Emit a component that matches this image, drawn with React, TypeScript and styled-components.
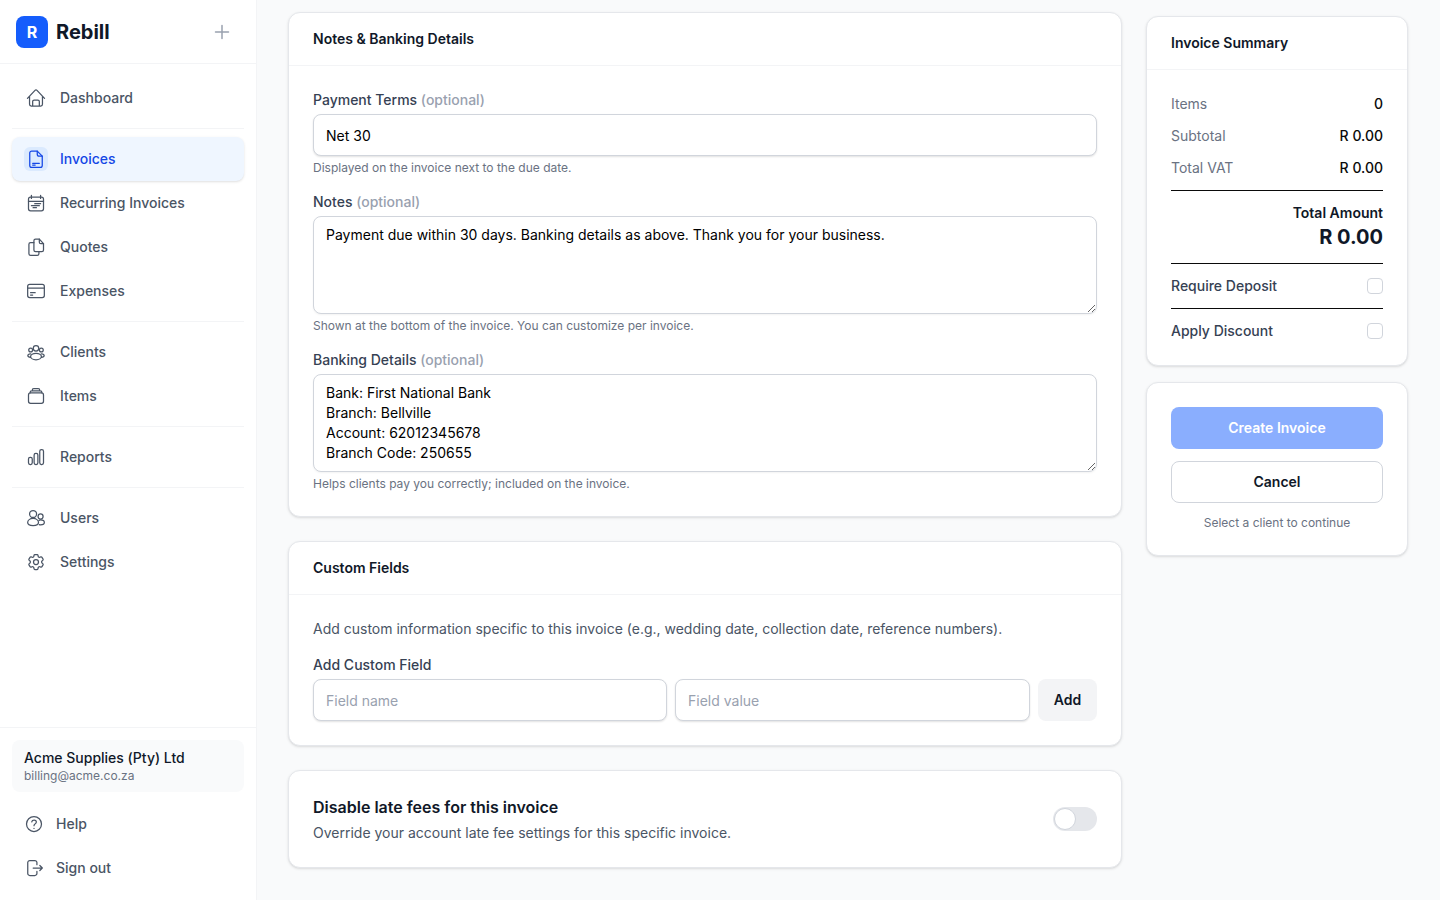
import React from "react";
import styled, { createGlobalStyle } from "styled-components";

const Global = createGlobalStyle`
  * { box-sizing: border-box; }
  html, body { margin: 0; padding: 0; height: 100%; }
  body { background: #f9fafb; font-family: Inter, "Liberation Sans", sans-serif; color: #101828; overflow: hidden; }
`;

const Shell = styled.div`
  display: flex;
  width: 1440px;
  height: 900px;
  overflow: hidden;
`;
const Sidebar = styled.aside`
  width: 257px;
  flex: none;
  height: 900px;
  background: #fff;
  border-right: 1px solid #f3f4f6;
  display: flex;
  flex-direction: column;
`;
const Brand = styled.div`
  height: 64px;
  flex: none;
  display: flex;
  align-items: center;
  padding: 0 16px;
  gap: 8px;
  border-bottom: 1px solid #f3f4f6;
`;
const Logo = styled.div`
  width: 32px;
  height: 32px;
  border-radius: 8px;
  background: #155dfc;
  color: #fff;
  font-size: 16px;
  font-weight: 700;
  display: flex;
  align-items: center;
  justify-content: center;
`;
const BrandName = styled.span`
  font-size: 20px;
  line-height: 28px;
  font-weight: 700;
  color: #101828;
  flex: 1;
`;
const PlusButton = styled.span`
  display: flex;
  margin-right: 8px;
  color: #99a1af;
`;
const Nav = styled.nav`
  flex: 1;
  padding: 12px 12px 0;
  display: flex;
  flex-direction: column;
`;
const NavDivider = styled.div`
  height: 1px;
  background: #f3f4f6;
  margin: 8px 0;
  flex: none;
`;
const NavItem = styled.a<{ $active?: boolean }>`
  height: 44px;
  flex: none;
  display: flex;
  align-items: center;
  gap: 12px;
  padding: 0 12px;
  font-size: 14px;
  line-height: 20px;
  font-weight: 500;
  border-radius: 8px;
  color: ${(p) => (p.$active ? "#1447e6" : "#4a5565")};
  background: ${(p) => (p.$active ? "#eff6ff" : "transparent")};
  box-shadow: ${(p) => (p.$active ? "0 1px 3px rgba(0,0,0,.1), 0 1px 2px -1px rgba(0,0,0,.1)" : "none")};
`;
const IconBox = styled.span<{ $active?: boolean }>`
  width: 24px;
  height: 24px;
  flex: none;
  display: flex;
  align-items: center;
  justify-content: center;
  border-radius: 6px;
  background: ${(p) => (p.$active ? "#dbeafe" : "transparent")};
`;
const SideFooter = styled.div`
  flex: none;
  border-top: 1px solid #f3f4f6;
  padding: 12px 12px 10px;
  display: flex;
  flex-direction: column;
`;
const Account = styled.div`
  height: 52px;
  padding: 8px 12px;
  border-radius: 8px;
  background: #f9fafb;
  margin-bottom: 10px;
`;
const AccountName = styled.div`
  font-size: 14px;
  line-height: 20px;
  font-weight: 500;
  color: #101828;
`;
const AccountMail = styled.div`
  font-size: 12px;
  line-height: 16px;
  color: #6a7282;
`;
const Main = styled.main`
  flex: 1;
  min-width: 0;
  padding: 12px 32px 32px 31px;
  display: flex;
  gap: 24px;
  align-items: flex-start;
`;
const LeftColumn = styled.div`
  width: 834px;
  flex: none;
  display: flex;
  flex-direction: column;
  gap: 24px;
`;
const RightColumn = styled.div`
  width: 262px;
  flex: none;
  margin-top: 4px;
  display: flex;
  flex-direction: column;
  gap: 16px;
`;
const Card = styled.section`
  background: #fff;
  border: 1px solid #e5e7eb;
  border-radius: 12px;
  box-shadow: 0 1px 3px rgba(0,0,0,.1), 0 1px 2px -1px rgba(0,0,0,.1);
`;
const CardHeader = styled.header`
  padding: 16px 24px;
  border-bottom: 1px solid #f3f4f6;
  font-size: 14px;
  line-height: 20px;
  font-weight: 600;
  color: #101828;
`;
const CardBody = styled.div`
  padding: 24px;
  display: flex;
  flex-direction: column;
  gap: 16px;
`;
const Field = styled.div`
  display: flex;
  flex-direction: column;
`;
const Label = styled.label`
  font-size: 14px;
  line-height: 20px;
  font-weight: 500;
  color: #364153;
  margin-bottom: 4px;
`;
const Optional = styled.span`
  color: #99a1af;
`;
const TextInput = styled.input`
  display: block;
  width: 100%;
  min-width: 0;
  height: 42px;
  padding: 8px 12px;
  border: 1px solid #d1d5dc;
  border-radius: 8px;
  box-shadow: 0 1px 2px rgba(0,0,0,.12);
  background: #fff;
  font: 400 14px/20px Inter, sans-serif;
  color: #000;
  outline: none;
  &::placeholder { color: #99a1af; opacity: 1; }
`;
const TextArea = styled.textarea`
  display: block;
  width: 100%;
  height: 98px;
  padding: 8px 12px;
  border: 1px solid #d1d5dc;
  border-radius: 8px;
  box-shadow: 0 1px 2px rgba(0,0,0,.05);
  background: #fff;
  font: 400 14px/20px Inter, sans-serif;
  color: #000;
  outline: none;
  resize: vertical;
`;
const Hint = styled.p`
  margin: 4px 0 0;
  font-size: 12px;
  line-height: 16px;
  color: #6a7282;
`;
const Intro = styled.p`
  margin: 0;
  font-size: 14px;
  line-height: 20px;
  color: #4a5565;
`;
const AddRow = styled.div`
  display: grid;
  grid-template-columns: 354px 355px 59px;
  gap: 8px;
`;
const AddButton = styled.button`
  height: 42px;
  border: none;
  border-radius: 8px;
  background: #f3f4f6;
  font: 600 14px/20px Inter, sans-serif;
  color: #101828;
`;
const ToggleCard = styled(Card)`
  padding: 24px;
  display: flex;
  align-items: center;
  justify-content: space-between;
`;
const ToggleTitle = styled.div`
  font-size: 16px;
  line-height: 24px;
  font-weight: 600;
  color: #101828;
  margin-bottom: 4px;
`;
const ToggleDesc = styled.div`
  font-size: 14px;
  line-height: 20px;
  color: #4a5565;
`;
const Toggle = styled.span`
  width: 44px;
  height: 24px;
  border-radius: 12px;
  background: #e5e7eb;
  padding: 1px;
  display: flex;
`;
const Knob = styled.span`
  width: 22px;
  height: 22px;
  border-radius: 50%;
  background: #fff;
  border: 1px solid #d1d5dc;
`;
const SummaryBody = styled.div`
  padding: 24px;
  display: flex;
  flex-direction: column;
`;
const SummaryRow = styled.div`
  display: flex;
  justify-content: space-between;
  font-size: 14px;
  line-height: 20px;
  margin-bottom: 12px;
`;
const SummaryKey = styled.span`
  color: #6a7282;
`;
const SummaryValue = styled.span`
  font-weight: 500;
  color: #0a0a0a;
`;
const TotalBlock = styled.div`
  border-top: 1px solid #0a0a0a;
  border-bottom: 1px solid #0a0a0a;
  padding: 12px 0;
  text-align: right;
`;
const TotalLabel = styled.div`
  font-size: 14px;
  line-height: 20px;
  font-weight: 600;
  color: #101828;
`;
const TotalValue = styled.div`
  font-size: 20px;
  line-height: 28px;
  font-weight: 700;
  color: #101828;
`;
const OptionRow = styled.div<{ $rule?: boolean }>`
  display: flex;
  justify-content: space-between;
  align-items: center;
  padding-top: 12px;
  padding-bottom: ${(p) => (p.$rule ? "12px" : "0")};
  border-bottom: ${(p) => (p.$rule ? "1px solid #0a0a0a" : "none")};
  font-size: 14px;
  line-height: 20px;
  font-weight: 500;
  color: #364153;
`;
const Check = styled.span`
  width: 16px;
  height: 16px;
  border: 1px solid #d1d5dc;
  border-radius: 4px;
  background: #fff;
`;
const ActionBody = styled.div`
  padding: 24px;
  display: flex;
  flex-direction: column;
  gap: 12px;
`;
const PrimaryButton = styled.button`
  height: 42px;
  border: none;
  border-radius: 8px;
  background: #8aaefe;
  color: #fff;
  font: 600 14px/20px Inter, sans-serif;
`;
const SecondaryButton = styled.button`
  height: 42px;
  border: 1px solid #d1d5dc;
  border-radius: 8px;
  background: #fff;
  color: #101828;
  font: 600 14px/20px Inter, sans-serif;
`;
const ActionHint = styled.div`
  font-size: 12px;
  line-height: 16px;
  text-align: center;
  color: #6a7282;
`;
const Svg = styled.svg`
  display: block;
  flex: none;
  fill: none;
  stroke: currentColor;
  stroke-width: 1.5;
  stroke-linecap: round;
  stroke-linejoin: round;
`;

const paths: Record<string, React.ReactNode> = {
  home: <path d="M1.750 12.500 10.800 2.900c.65-.7 1.750-.7 2.400 0l9.050 9.600M4.250 9.800v9.700c0 1.200.9 2.100 2.100 2.100h11.300c1.200 0 2.100-.9 2.100-2.100V9.800M8 21.600v-5.400c0-1 .8-1.800 1.800-1.800h4.400c1 0 1.800.8 1.800 1.800v5.400" />,
  doc: <><path d="M13.500 2.500H6.800A2.300 2.300 0 0 0 4.500 4.800v14.900a2.300 2.300 0 0 0 2.300 2.300h10.400a2.300 2.300 0 0 0 2.300-2.300V8.500z" /><path d="M13.500 2.500v3.700c0 1.300 1 2.300 2.300 2.300h3.700M8 17.200h8M8 19.200h3" /></>,
  recurring: <><rect x="3" y="5" width="18" height="16.500" rx="2.500" /><path d="M6.500 2.750V6.500M17.500 2.750V6.500M3 10h18M10.500 12.800h7M6.500 15.200h9.500M8.500 17.600h4" /></>,
  quotes: <><path d="M9.500 15V4.500c0-1.100.9-2 2-2h4.500L21 8v7.500c0 1.100-.9 2-2 2h-7.500c-1.100 0-2-.9-2-2z" /><path d="M16 2.500v3.700c0 1 .8 1.800 1.800 1.800H21" /><path d="M9.500 6.800H5.500a2 2 0 0 0-2 2v11.200a2 2 0 0 0 2 2h8a2 2 0 0 0 2-2v-2.500" /></>,
  card: <><rect x="2" y="4" width="20" height="16" rx="2.500" /><path d="M2 8.500h20M5.500 14h5.500M5.500 16.800h2.500" /></>,
  clients: <><circle cx="12" cy="7.500" r="3.300" /><circle cx="5.600" cy="9.600" r="2.300" /><circle cx="18.400" cy="9.600" r="2.300" /><ellipse cx="12" cy="17.400" rx="6.500" ry="3.900" /><path d="M5.600 14.200c-2 .1-3.400.9-3.400 2.100 0 1.200 1.400 2 3.400 2.100M18.400 14.200c2 .1 3.400.9 3.400 2.100 0 1.200-1.400 2-3.400 2.100" /></>,
  items: <><rect x="3" y="8.200" width="18" height="12.500" rx="2.500" /><path d="M5 8.200V7.500c0-1 .8-1.800 1.800-1.800h10.400c1 0 1.800.8 1.800 1.800v.7M7.500 5.700V5c0-1 .8-1.800 1.800-1.800h5.400c1 0 1.800.8 1.800 1.800v.7" /></>,
  reports: <><rect x="3" y="12.500" width="4.500" height="8.500" rx="2" /><rect x="9.750" y="7.500" width="4.500" height="13.500" rx="2" /><rect x="16.500" y="3" width="4.500" height="18" rx="2" /></>,
  users: <><circle cx="8.500" cy="7.200" r="4.200" /><circle cx="17.500" cy="10.200" r="3" /><path d="M2 17.500c0-2.800 2.800-5 6.500-5s6.500 2.200 6.500 5c0 2.300-2.800 3.600-6.500 3.600S2 19.800 2 17.500z" /><path d="M15.500 15c.6-.4 1.300-.6 2-.6 2.500 0 4.500 1.300 4.500 3 0 1.700-2 2.800-4.500 2.800-.6 0-1.100 0-1.600-.2" /></>,
  settings: <><path d="M9.594 3.940c.09-.542.56-.94 1.110-.94h2.593c.55 0 1.020.398 1.110.940l.213 1.281c.063.374.313.686.645.870.074.040.147.083.22.127.325.196.72.257 1.075.124l1.217-.456a1.125 1.125 0 0 1 1.370.490l1.296 2.247a1.125 1.125 0 0 1-.26 1.431l-1.003.827c-.293.241-.438.613-.43.992a7.723 7.723 0 0 1 0 .255c-.008.378.137.75.43.991l1.004.827c.424.35.534.955.26 1.430l-1.298 2.247a1.125 1.125 0 0 1-1.369.491l-1.217-.456c-.355-.133-.75-.072-1.076.124a6.470 6.470 0 0 1-.22.128c-.331.183-.581.495-.644.869l-.213 1.281c-.09.543-.56.94-1.110.94h-2.594c-.55 0-1.019-.398-1.110-.94l-.213-1.281c-.062-.374-.312-.686-.644-.87a6.520 6.520 0 0 1-.22-.127c-.325-.196-.72-.257-1.076-.124l-1.217.456a1.125 1.125 0 0 1-1.369-.49l-1.297-2.247a1.125 1.125 0 0 1 .26-1.431l1.004-.827c.292-.24.437-.613.43-.991a6.932 6.932 0 0 1 0-.255c.007-.38-.138-.751-.43-.992l-1.004-.827a1.125 1.125 0 0 1-.26-1.430l1.297-2.247a1.125 1.125 0 0 1 1.370-.491l1.216.456c.356.133.751.072 1.076-.124.072-.044.146-.086.22-.128.332-.183.582-.495.644-.869l.214-1.280Z" /><circle cx="12" cy="12" r="3" /></>,
  help: <><circle cx="12" cy="12" r="9" /><path d="M9.300 9.500c.3-1.500 1.400-2.300 2.800-2.300 1.500 0 2.700 1 2.700 2.400 0 2.200-2.800 2.300-2.800 4.400M12 17.200v.1" /></>,
  signout: <><path d="M15.500 8V5.500A2.500 2.500 0 0 0 13 3H7a2.500 2.500 0 0 0-2.500 2.500v13A2.500 2.500 0 0 0 7 21h6a2.500 2.500 0 0 0 2.500-2.500V16" /><path d="M11 12h11M19 9l3 3-3 3" /></>,
};

const Icon = ({ name }: { name: string }) => (
  <Svg width={20} height={20} viewBox="0 0 24 24">{paths[name]}</Svg>
);

const Row = ({ icon, label, active }: { icon: string; label: string; active?: boolean }) => (
  <NavItem $active={active}>
    <IconBox $active={active}><Icon name={icon} /></IconBox>
    {label}
  </NavItem>
);

const FooterLink = ({ icon, label }: { icon: string; label: string }) => (
  <NavItem>
    <Icon name={icon} />
    {label}
  </NavItem>
);

export default function App() {
  return (
    <Shell>
      <Global />
      <Sidebar>
        <Brand>
          <Logo>R</Logo>
          <BrandName>Rebill</BrandName>
          <PlusButton>
            <Svg width={20} height={20} viewBox="0 0 20 20"><path d="M10 3.500v13M3.500 10h13" /></Svg>
          </PlusButton>
        </Brand>
        <Nav>
          <Row icon="home" label="Dashboard" />
          <NavDivider />
          <Row icon="doc" label="Invoices" active />
          <Row icon="recurring" label="Recurring Invoices" />
          <Row icon="quotes" label="Quotes" />
          <Row icon="card" label="Expenses" />
          <NavDivider />
          <Row icon="clients" label="Clients" />
          <Row icon="items" label="Items" />
          <NavDivider />
          <Row icon="reports" label="Reports" />
          <NavDivider />
          <Row icon="users" label="Users" />
          <Row icon="settings" label="Settings" />
        </Nav>
        <SideFooter>
          <Account>
            <AccountName>Acme Supplies (Pty) Ltd</AccountName>
            <AccountMail>billing@acme.co.za</AccountMail>
          </Account>
          <FooterLink icon="help" label="Help" />
          <FooterLink icon="signout" label="Sign out" />
        </SideFooter>
      </Sidebar>
      <Main>
        <LeftColumn>
          <Card>
            <CardHeader>Notes &amp; Banking Details</CardHeader>
            <CardBody>
              <Field>
                <Label>Payment Terms <Optional>(optional)</Optional></Label>
                <TextInput defaultValue="Net 30" />
                <Hint>Displayed on the invoice next to the due date.</Hint>
              </Field>
              <Field>
                <Label>Notes <Optional>(optional)</Optional></Label>
                <TextArea defaultValue="Payment due within 30 days. Banking details as above. Thank you for your business." />
                <Hint>Shown at the bottom of the invoice. You can customize per invoice.</Hint>
              </Field>
              <Field>
                <Label>Banking Details <Optional>(optional)</Optional></Label>
                <TextArea defaultValue={"Bank: First National Bank\nBranch: Bellville\nAccount: 62012345678\nBranch Code: 250655"} />
                <Hint>Helps clients pay you correctly; included on the invoice.</Hint>
              </Field>
            </CardBody>
          </Card>
          <Card>
            <CardHeader>Custom Fields</CardHeader>
            <CardBody>
              <Intro>Add custom information specific to this invoice (e.g., wedding date, collection date, reference numbers).</Intro>
              <Field>
                <Label>Add Custom Field</Label>
                <AddRow>
                  <TextInput placeholder="Field name" />
                  <TextInput placeholder="Field value" />
                  <AddButton>Add</AddButton>
                </AddRow>
              </Field>
            </CardBody>
          </Card>
          <ToggleCard>
            <div>
              <ToggleTitle>Disable late fees for this invoice</ToggleTitle>
              <ToggleDesc>Override your account late fee settings for this specific invoice.</ToggleDesc>
            </div>
            <Toggle><Knob /></Toggle>
          </ToggleCard>
        </LeftColumn>
        <RightColumn>
          <Card>
            <CardHeader>Invoice Summary</CardHeader>
            <SummaryBody>
              <SummaryRow><SummaryKey>Items</SummaryKey><SummaryValue>0</SummaryValue></SummaryRow>
              <SummaryRow><SummaryKey>Subtotal</SummaryKey><SummaryValue>R 0.00</SummaryValue></SummaryRow>
              <SummaryRow><SummaryKey>Total VAT</SummaryKey><SummaryValue>R 0.00</SummaryValue></SummaryRow>
              <TotalBlock>
                <TotalLabel>Total Amount</TotalLabel>
                <TotalValue>R 0.00</TotalValue>
              </TotalBlock>
              <OptionRow $rule>Require Deposit<Check /></OptionRow>
              <OptionRow>Apply Discount<Check /></OptionRow>
            </SummaryBody>
          </Card>
          <Card>
            <ActionBody>
              <PrimaryButton>Create Invoice</PrimaryButton>
              <SecondaryButton>Cancel</SecondaryButton>
              <ActionHint>Select a client to continue</ActionHint>
            </ActionBody>
          </Card>
        </RightColumn>
      </Main>
    </Shell>
  );
}
